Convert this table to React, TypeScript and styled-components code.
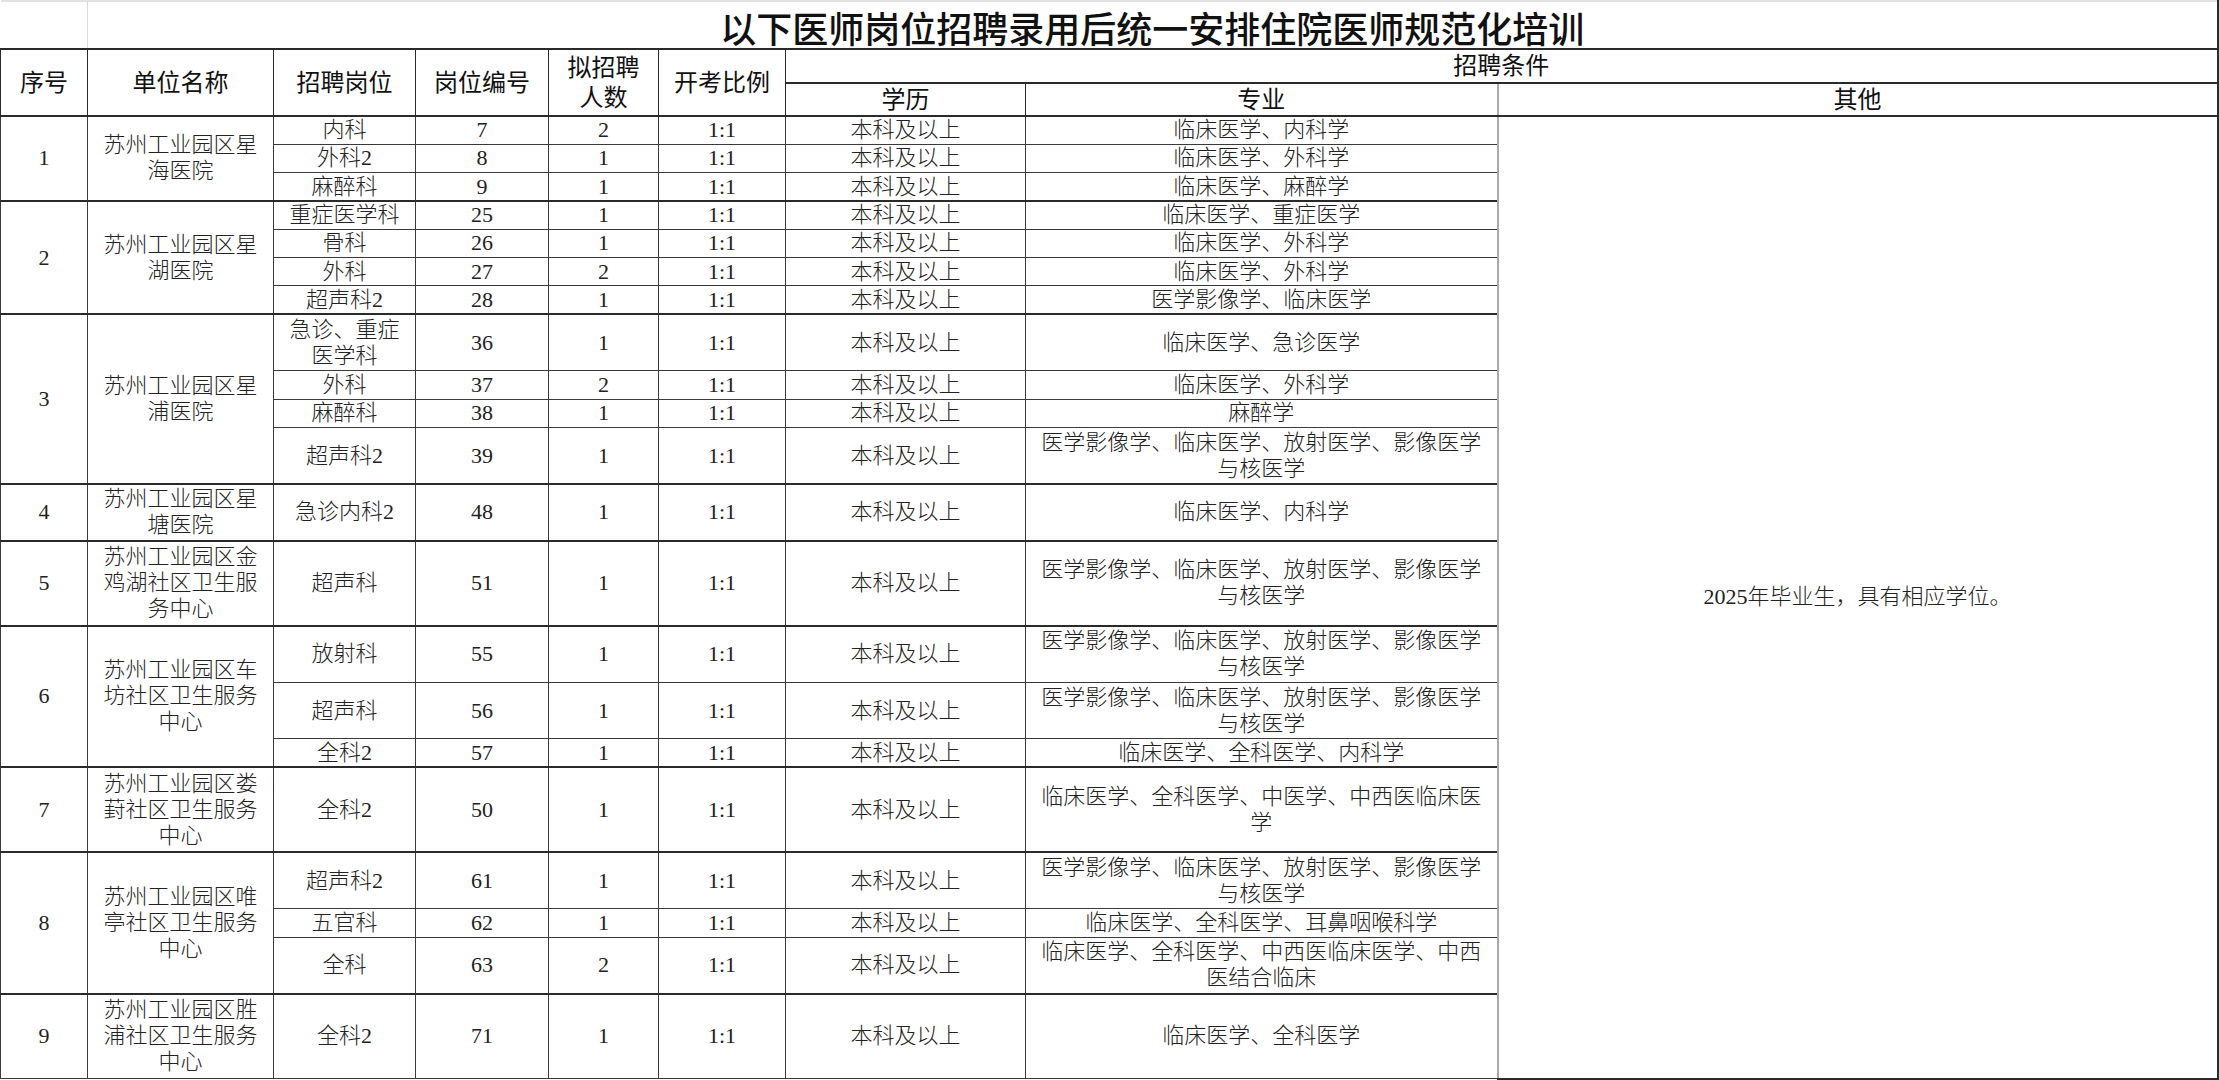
import React from 'react';
import styled, { createGlobalStyle } from 'styled-components';

const GlobalStyle = createGlobalStyle`
  html, body {
    margin: 0;
    padding: 0;
    background: #fff;
  }
  body {
    font-family: "Liberation Serif", "Noto Sans CJK SC", serif;
    color: #222;
  }
`;

const UNIT = 28.32;
const DARK = '#2a2a2a';
const SOFT = '#a9a9a9';

type Post = { name: string; code: string; count: string; span: number; major: string };
type Group = { no: number; unit: string; posts: Post[] };

const IMAGING = '医学影像学、临床医学、放射医学、影像医学与核医学';

const groups: Group[] = [
  {
    no: 1,
    unit: '苏州工业园区星海医院',
    posts: [
      { name: '内科', code: '7', count: '2', span: 1, major: '临床医学、内科学' },
      { name: '外科2', code: '8', count: '1', span: 1, major: '临床医学、外科学' },
      { name: '麻醉科', code: '9', count: '1', span: 1, major: '临床医学、麻醉学' },
    ],
  },
  {
    no: 2,
    unit: '苏州工业园区星湖医院',
    posts: [
      { name: '重症医学科', code: '25', count: '1', span: 1, major: '临床医学、重症医学' },
      { name: '骨科', code: '26', count: '1', span: 1, major: '临床医学、外科学' },
      { name: '外科', code: '27', count: '2', span: 1, major: '临床医学、外科学' },
      { name: '超声科2', code: '28', count: '1', span: 1, major: '医学影像学、临床医学' },
    ],
  },
  {
    no: 3,
    unit: '苏州工业园区星浦医院',
    posts: [
      { name: '急诊、重症医学科', code: '36', count: '1', span: 2, major: '临床医学、急诊医学' },
      { name: '外科', code: '37', count: '2', span: 1, major: '临床医学、外科学' },
      { name: '麻醉科', code: '38', count: '1', span: 1, major: '麻醉学' },
      { name: '超声科2', code: '39', count: '1', span: 2, major: IMAGING },
    ],
  },
  {
    no: 4,
    unit: '苏州工业园区星塘医院',
    posts: [{ name: '急诊内科2', code: '48', count: '1', span: 2, major: '临床医学、内科学' }],
  },
  {
    no: 5,
    unit: '苏州工业园区金鸡湖社区卫生服务中心',
    posts: [{ name: '超声科', code: '51', count: '1', span: 3, major: IMAGING }],
  },
  {
    no: 6,
    unit: '苏州工业园区车坊社区卫生服务中心',
    posts: [
      { name: '放射科', code: '55', count: '1', span: 2, major: IMAGING },
      { name: '超声科', code: '56', count: '1', span: 2, major: IMAGING },
      { name: '全科2', code: '57', count: '1', span: 1, major: '临床医学、全科医学、内科学' },
    ],
  },
  {
    no: 7,
    unit: '苏州工业园区娄葑社区卫生服务中心',
    posts: [
      { name: '全科2', code: '50', count: '1', span: 3, major: '临床医学、全科医学、中医学、中西医临床医学' },
    ],
  },
  {
    no: 8,
    unit: '苏州工业园区唯亭社区卫生服务中心',
    posts: [
      { name: '超声科2', code: '61', count: '1', span: 2, major: IMAGING },
      { name: '五官科', code: '62', count: '1', span: 1, major: '临床医学、全科医学、耳鼻咽喉科学' },
      {
        name: '全科',
        code: '63',
        count: '2',
        span: 2,
        major: '临床医学、全科医学、中西医临床医学、中西医结合临床',
      },
    ],
  },
  {
    no: 9,
    unit: '苏州工业园区胜浦社区卫生服务中心',
    posts: [{ name: '全科2', code: '71', count: '1', span: 3, major: '临床医学、全科医学' }],
  },
];

const totalPosts = groups.reduce((n, g) => n + g.posts.length, 0);

const columns = [87, 186, 142, 133, 110, 127, 240, 472, 720];

export default function App() {
  return (
    <>
      <GlobalStyle />
      <Sheet>
        <colgroup>
          {columns.map((w, i) => (
            <col key={i} style={{ width: w }} />
          ))}
        </colgroup>
        <thead>
          <TitleRow>
            <BlankCorner />
            <TitleCell colSpan={8}>以下医师岗位招聘录用后统一安排住院医师规范化培训</TitleCell>
          </TitleRow>
          <HeadRow $h={34}>
            <HeadCell rowSpan={2}>序号</HeadCell>
            <HeadCell rowSpan={2}>单位名称</HeadCell>
            <HeadCell rowSpan={2}>招聘岗位</HeadCell>
            <HeadCell rowSpan={2}>岗位编号</HeadCell>
            <HeadCell rowSpan={2}>拟招聘人数</HeadCell>
            <HeadCell rowSpan={2}>开考比例</HeadCell>
            <HeadCell colSpan={3} $last>
              招聘条件
            </HeadCell>
          </HeadRow>
          <HeadRow $h={33}>
            <HeadCell>学历</HeadCell>
            <HeadCell>专业</HeadCell>
            <HeadCell $soft $last>
              其他
            </HeadCell>
          </HeadRow>
        </thead>
        <tbody>
          {groups.map((g, gi) =>
            g.posts.map((p, pi) => (
              <DataRow key={`${g.no}-${p.code}`} $h={p.span * UNIT}>
                {pi === 0 && (
                  <>
                    <Cell rowSpan={g.posts.length} $groupTop>
                      {g.no}
                    </Cell>
                    <Cell rowSpan={g.posts.length} $groupTop>
                      {g.unit}
                    </Cell>
                  </>
                )}
                <Cell $groupTop={pi === 0}>{p.name}</Cell>
                <Cell $groupTop={pi === 0}>{p.code}</Cell>
                <Cell $groupTop={pi === 0}>{p.count}</Cell>
                <Cell $groupTop={pi === 0}>1:1</Cell>
                <Cell $groupTop={pi === 0}>本科及以上</Cell>
                <Cell $groupTop={pi === 0}>{p.major}</Cell>
                {gi === 0 && pi === 0 && (
                  <OtherCell rowSpan={totalPosts}>2025年毕业生，具有相应学位。</OtherCell>
                )}
              </DataRow>
            ))
          )}
        </tbody>
      </Sheet>
    </>
  );
}

const Sheet = styled.table`
  width: 2217px;
  table-layout: fixed;
  border-collapse: collapse;
  border-spacing: 0;
  font-family: "Liberation Serif", "Noto Sans CJK SC", serif;
  color: #222;
`;

const TitleRow = styled.tr`
  height: 48px;
`;

const BlankCorner = styled.td`
  padding: 0;
  border-top: 2px solid #e2e2e2;
  border-right: 1px solid #d9d9d9;
  border-bottom: 2px solid ${DARK};
`;

const TitleCell = styled.td`
  padding: 4px 0 0 0;
  border-top: 2px solid #e2e2e2;
  border-right: 2px solid ${DARK};
  border-bottom: 2px solid ${DARK};
  font-family: "Noto Sans CJK SC", sans-serif;
  font-size: 36px;
  font-weight: 500;
  line-height: 38px;
  color: #111;
  text-align: center;
  vertical-align: middle;
  white-space: nowrap;
`;

const HeadRow = styled.tr<{ $h: number }>`
  height: ${({ $h }) => $h}px;
`;

const HeadCell = styled.th<{ $soft?: boolean; $last?: boolean }>`
  padding: 0 8px;
  border-left: ${({ $soft }) => ($soft ? `2px solid ${SOFT}` : `1px solid ${DARK}`)};
  border-right: ${({ $last }) => ($last ? `2px solid ${DARK}` : `1px solid ${DARK}`)};
  border-top: 1px solid ${DARK};
  border-bottom: 2px solid ${DARK};
  font-family: "Liberation Serif", "Noto Sans CJK SC", serif;
  font-size: 24px;
  font-weight: 400;
  line-height: 30px;
  color: #111;
  text-align: center;
  vertical-align: middle;
`;

const DataRow = styled.tr<{ $h: number }>`
  height: ${({ $h }) => $h}px;
`;

const Cell = styled.td<{ $groupTop?: boolean }>`
  padding: 0 8px;
  border: 1px solid #3a3a3a;
  border-top: ${({ $groupTop }) => ($groupTop ? `2px solid ${DARK}` : '1px solid #3a3a3a')};
  font-size: 22px;
  font-weight: 300;
  line-height: 26px;
  text-align: center;
  vertical-align: middle;
  overflow: hidden;
`;

const OtherCell = styled.td`
  padding: 0 8px;
  border-left: 2px solid ${SOFT};
  border-right: 2px solid ${DARK};
  border-bottom: 2px solid ${DARK};
  border-top: 2px solid ${DARK};
  font-size: 22px;
  font-weight: 300;
  line-height: 26px;
  text-align: center;
  vertical-align: middle;
`;
